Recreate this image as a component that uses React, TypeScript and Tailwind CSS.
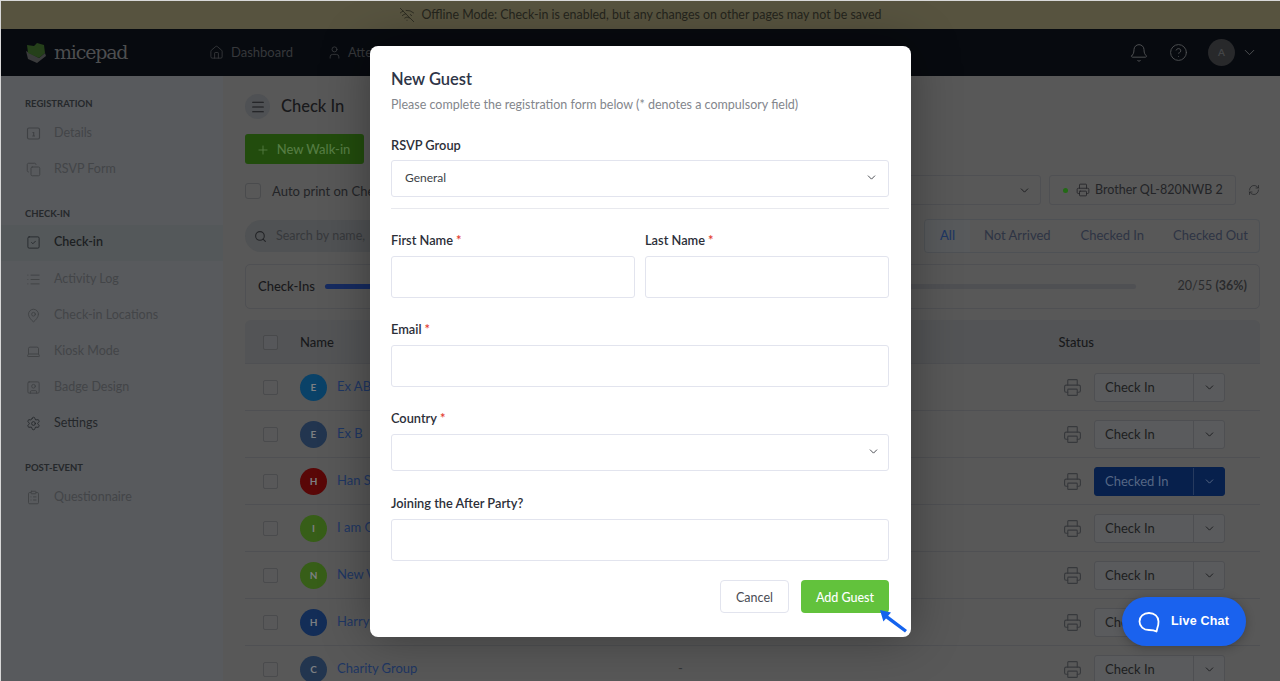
import { Bell, ChevronDown, CircleHelp, ClipboardList, Copy, Home, Laptop, List, MapPin, Menu, Plus, Printer, RefreshCw, Search, Settings, SquareCheck, SquareUser, User, WifiOff } from "lucide-react";

const DetailsIcon = ({ size, className }: { size?: number; strokeWidth?: number; className?: string }) => (
    <svg width={size} height={size} viewBox="0 0 15 15" fill="none" stroke="currentColor" strokeWidth="1.1" className={className}>
        <rect x="1.5" y="2" width="12" height="11" rx="1.5" />
        <path d="M6.5 6.5 H7.7 V10 M6.3 10 H9" />
    </svg>
);

const sidebarTop = [
    { label: "Details", icon: DetailsIcon },
    { label: "RSVP Form", icon: Copy },
];

const sidebarCheckin = [
    { label: "Check-in", icon: SquareCheck, active: true },
    { label: "Activity Log", icon: List },
    { label: "Check-in Locations", icon: MapPin },
    { label: "Kiosk Mode", icon: Laptop },
    { label: "Badge Design", icon: SquareUser },
    { label: "Settings", icon: Settings, dark: true },
];

const guests = [
    { initial: "E", name: "Ex AB", color: "bg-[#0a4268]" },
    { initial: "E", name: "Ex B", color: "bg-[#22354f]" },
    { initial: "H", name: "Han S", color: "bg-[#590707]", checked: true },
    { initial: "I", name: "I am G", color: "bg-[#375e18]" },
    { initial: "N", name: "New V", color: "bg-[#375e18]" },
    { initial: "H", name: "Harry", color: "bg-[#132d57]" },
    { initial: "C", name: "Charity Group", color: "bg-[#22354f]" },
];

const SidebarItem = ({ label, icon: Icon, active, dark }: { label: string; icon: React.ElementType; active?: boolean; dark?: boolean }) => (
    <div className={`flex items-center h-9 pl-[25px] text-[12.5px] ${active ? "bg-[#54585a] pb-[2px] font-semibold text-[#1c1f22]" : dark ? "text-[#24272a]" : "text-[#434548]"}`}>
        <Icon size={15} strokeWidth={1.4} className={active || dark ? "text-[#24272a]" : "text-[#3f4144]"} />
        <span className="ml-[13px]">{label}</span>
    </div>
);

const Sidebar = () => (
    <div className="w-[222px] shrink-0 bg-[#585a5d] pt-[22px]">
        <p className="pl-[24px] text-[9.5px] leading-3 font-bold text-[#25282b]">REGISTRATION</p>
        <div className="mt-[5px]">
            {sidebarTop.map((item) => <SidebarItem key={item.label} {...item} />)}
        </div>
        <p className="mt-[21px] pl-[24px] text-[9.5px] leading-3 font-bold text-[#25282b]">CHECK-IN</p>
        <div className="mt-[5px]">
            {sidebarCheckin.map((item) => <SidebarItem key={item.label} {...item} />)}
        </div>
        <p className="mt-[21px] pl-[24px] text-[9.5px] leading-3 font-bold text-[#25282b]">POST-EVENT</p>
        <div className="mt-[5px]">
            <SidebarItem label="Questionnaire" icon={ClipboardList} />
        </div>
    </div>
);

const TopBar = () => (
    <div className="flex items-center h-[47px] bg-[#070a0f] shrink-0">
        <div className="flex items-center w-[208px] pl-[24px]">
            <svg width="22" height="20" viewBox="0 0 22 20">
                <path d="M1 8 L14 15 L20 10 L21 13 L12 20 L3 16 Z" fill="#3a3b3c" />
                <path d="M2 2 L9 3 L12 0 L19 2 L20 10 L14 15 L3 10 Z" fill="#25401a" />
            </svg>
            <span className="ml-[7px] text-[19px] leading-none text-[#4d4e50] font-['DejaVu_Serif',serif] tracking-[-1.2px]">micepad</span>
        </div>
        <Home size={15} strokeWidth={1.3} className="text-[#3b3d40]" />
        <span className="ml-[7px] text-[13px] text-[#36383b]">Dashboard</span>
        <User size={15} strokeWidth={1.3} className="ml-[34px] text-[#3b3d40]" />
        <span className="ml-[6px] text-[13px] text-[#36383b]">Attendees</span>
        <div className="ml-auto flex items-center pr-[22px]">
            <Bell size={20} strokeWidth={1.2} className="text-[#4d4f51]" />
            <CircleHelp size={19} strokeWidth={1.2} className="ml-[20px] text-[#4d4f51]" />
            <div className="ml-[20px] flex items-center justify-center w-[27px] h-[27px] rounded-full bg-[#28292b] text-[10px] font-bold text-[#434547]">A</div>
            <ChevronDown size={17} strokeWidth={1.4} className="ml-[6px] text-[#4d4f51]" />
        </div>
    </div>
);

const StatusButton = ({ checked }: { checked?: boolean }) => (
    <div className={`flex w-[131px] h-[29px] rounded-[3px] border text-[13px] ${checked ? "bg-[#07204c] border-[#07204c] text-[#566784]" : "bg-[#5a5b5d] border-[#4e4f52] text-[#1d1e20]"}`}>
        <span className={`flex-1 pl-[10px] leading-[27px] border-r ${checked ? "border-[#263a5e]" : "border-[#4e4f52]"}`}>{checked ? "Checked In" : "Check In"}</span>
        <span className="flex items-center justify-center w-[30px]"><ChevronDown size={13} strokeWidth={1.8} className={checked ? "text-[#566784]" : "text-[#1d1e20]"} /></span>
    </div>
);

const GuestRow = ({ initial, name, color, checked }: { initial: string; name: string; color: string; checked?: boolean }) => (
    <div className="flex items-center h-[47px] border-t border-[#4f5053]">
        <div className="ml-[18px] w-[15px] h-[15px] rounded-[2px] border border-[#4a4b4d] bg-[#585859]" />
        <div className={`ml-[22px] flex items-center justify-center w-[27px] h-[27px] rounded-full text-[10px] font-bold text-[#7c7f82] ${color}`}>{initial}</div>
        <span className="ml-[10px] w-[341px] text-[13px] text-[#1e3663] whitespace-nowrap">{name}</span>
        <span className="text-[13px] text-[#333537]">-</span>
        <div className="ml-auto flex items-center pr-[35px]">
            <Printer size={19} strokeWidth={1.4} className="text-[#37393c]" />
            <div className="ml-[12px]"><StatusButton checked={checked} /></div>
        </div>
    </div>
);

const Main = () => (
    <div className="flex-1 bg-[#585858] pl-[22px] pr-[20px] pt-[18px] min-w-0">
        <div className="flex items-center h-[25px]">
            <div className="flex items-center justify-center w-[25px] h-[25px] rounded-full bg-[#4f5154]">
                <Menu size={16} strokeWidth={1.6} className="text-[#18191b]" />
            </div>
            <h1 className="ml-[11px] text-[16.5px] font-medium text-[#18191b]">Check In</h1>
        </div>
        <div className="mt-[15px] flex items-center justify-center pt-[1px] pr-[3px] w-[119px] h-[30px] rounded-[3px] bg-[#224c0d] text-[13px] font-medium text-[#557c43]">
            <Plus size={14} strokeWidth={1.5} className="mr-[7px]" />New Walk-in
        </div>
        <div className="mt-[11px] flex items-center h-[30px]">
            <div className="w-[16px] h-[16px] rounded-[3px] border border-[#4a4b4d] mt-[2px]" />
            <span className="ml-[11px] mt-[3px] text-[13px] text-[#232427] whitespace-nowrap">Auto print on Check-in</span>
            <div className="ml-auto mr-[8px] flex items-center justify-end w-[300px] h-[30px] rounded-[3px] border border-[#4f5053] pr-[9px]">
                <ChevronDown size={13} strokeWidth={1.8} className="text-[#1d1e20]" />
            </div>
            <div className="flex items-center w-[187px] h-[30px] rounded-[3px] border border-[#4f5053] pl-[13px] text-[12.5px] text-[#232427]">
                <span className="w-[5px] h-[5px] rounded-full bg-[#236a16]" />
                <Printer size={14} strokeWidth={1.4} className="ml-[8px] mr-[5px]" />Brother QL-820NWB 2
            </div>
            <div className="flex justify-end w-[24px]"><RefreshCw size={12} strokeWidth={1.4} className="text-[#232427]" /></div>
        </div>
        <div className="mt-[14px] flex items-center h-[34px]">
            <div className="flex items-center w-[300px] h-[32px] rounded-full bg-[#505254] pl-[9px]">
                <Search size={13} strokeWidth={2} className="text-[#232427]" />
                <span className="ml-[9px] text-[12.5px] text-[#37393c]">Search by name,</span>
            </div>
            <div className="ml-auto flex items-center w-[336px] h-[34px] rounded-[4px] border border-[#4e5155] text-[13px] text-[#2e3444] overflow-hidden">
                <span className="flex items-center justify-center w-[45px] h-full bg-[#585a5c] text-[#1e3663] font-medium">All</span>
                <span className="ml-[14px]">Not Arrived</span>
                <span className="ml-[30px]">Checked In</span>
                <span className="ml-[29px]">Checked Out</span>
            </div>
        </div>
        <div className="mt-[11px] flex items-center h-[45px] rounded-[5px] border border-[#4f5053] pl-[12px]">
            <span className="w-[67px] text-[13px] font-medium text-[#18191b]">Check-Ins</span>
            <div className="w-[811px] h-[5px] rounded-full bg-[#4f5053]">
                <div className="h-full w-[36%] rounded-full bg-[#162b60]" />
            </div>
            <span className="ml-auto pr-[12px] text-[12.5px] text-[#2a2b2d]">20/55 <b>(36%)</b></span>
        </div>
        <div className="mt-[11px] rounded-t-[6px] overflow-hidden">
            <div className="flex items-center h-[43px] pt-[2px] bg-[#535456] text-[13px] font-medium text-[#18191b]">
                <div className="ml-[18px] w-[15px] h-[15px] rounded-[2px] border border-[#48494b] bg-[#56575a]" />
                <span className="ml-[22px]">Name</span>
                <span className="ml-auto mr-[166px]">Status</span>
            </div>
            {guests.map((guest, i) => <GuestRow key={i} {...guest} />)}
        </div>
    </div>
);

const Field = ({ label, children, required, tight }: { label: string; children: React.ReactNode; required?: boolean; tight?: boolean }) => (
    <div className="flex-1">
        <p className="text-[12.8px] leading-4 font-semibold text-[#2b2e38]">
            {label}{required && <span className="ml-[3px] text-[#e23a2e]">*</span>}
        </p>
        <div className={tight ? "mt-[7px]" : "mt-[8px]"}>{children}</div>
    </div>
);

const TextBox = () => <div className="h-[42px] rounded-[3px] border border-[#e2e4ee] bg-white" />;

const SelectBox = ({ value, height, chevron }: { value?: string; height: string; chevron: string }) => (
    <div className={`flex items-center justify-between rounded-[3px] border border-[#e2e4ee] bg-white pl-[13px] pb-[2px] text-[12px] text-[#3c3f46] ${height} ${chevron}`}>
        <span>{value}</span>
        <ChevronDown size={13} strokeWidth={1.6} className="text-[#33363c]" />
    </div>
);

const NewGuestModal = () => (
    <div className="absolute left-[369px] top-[45px] w-[541px] h-[591px] rounded-[8px] bg-white pl-[21px] pr-[22px] pt-[22px] shadow-[0_0_48px_rgba(0,0,0,0.35)]">
        <h2 className="text-[16.5px] leading-[22px] font-semibold text-[#2e3547]">New Guest</h2>
        <p className="mt-[7px] text-[12.5px] leading-4 text-[#83868c]">Please complete the registration form below (* denotes a compulsory field)</p>
        <div className="mt-[24px]">
            <Field label="RSVP Group" tight><SelectBox value="General" height="h-[37px]" chevron="pr-[10px]" /></Field>
        </div>
        <div className="mt-[11px] h-px bg-[#e8e9ee]" />
        <div className="mt-[23px] flex gap-[10px]">
            <Field label="First Name" required><TextBox /></Field>
            <Field label="Last Name" required><TextBox /></Field>
        </div>
        <div className="mt-[23px]">
            <Field label="Email" required><TextBox /></Field>
        </div>
        <div className="mt-[23px]">
            <Field label="Country" required><SelectBox height="h-[37px]" chevron="pr-[8px]" /></Field>
        </div>
        <div className="mt-[24px]">
            <Field label="Joining the After Party?"><TextBox /></Field>
        </div>
        <div className="mt-[19px] flex justify-end gap-[12px]">
            <div className="flex items-center justify-center pt-[3px] w-[69px] h-[33px] rounded-[4px] border border-[#e2e4ee] text-[12.5px] text-[#4a4d55]">Cancel</div>
            <div className="flex items-center justify-center pt-[3px] w-[88px] h-[33px] rounded-[4px] bg-[#62c23c] text-[12.5px] font-medium text-white">Add Guest</div>
        </div>
        <svg width="32" height="26" viewBox="0 0 32 26" className="absolute left-[508px] top-[563px]">
            <path d="M2 1 L13 3.5 L10.2 6.8 L29 21 L27 23.5 L8 9.5 L5.4 12.6 Z" fill="#1463ee" />
        </svg>
    </div>
);

const LiveChat = () => (
    <div className="absolute left-[1121px] top-[596px] flex items-center w-[124px] h-[49px] rounded-full bg-[#1a62ee] pl-[15px] shadow-[0_2px_10px_rgba(0,0,0,0.25)] font-['Liberation_Sans',sans-serif] text-[12.5px] font-bold text-white">
        <svg width="24" height="24" viewBox="0 0 24 24" fill="none" stroke="white" strokeWidth="1.8">
            <path d="M12 3 C6.5 3 2.5 6.6 2.5 11.5 C2.5 16.4 6.5 20 12 20 C14.5 20 17 20 19.5 21.5 L20.5 17.5 C21.2 16 21.5 13.5 21.5 11.5 C21.5 6.6 17.5 3 12 3 Z" strokeLinejoin="round" />
        </svg>
        <span className="ml-[10px] tracking-[0.2px]">Live Chat</span>
    </div>
);

export default function App() {
    return (
        <div className="relative flex flex-col h-[681px] overflow-hidden border-t border-l border-[#d8d8d8] font-['Lato',sans-serif]">
            <div className="flex items-center justify-center gap-[6px] h-[28px] shrink-0 bg-[#57533f] text-[12.4px] text-[#24241c]">
                <WifiOff size={16} strokeWidth={1.2} />
                <span>Offline Mode: Check-in is enabled, but any changes on other pages may not be saved</span>
            </div>
            <TopBar />
            <div className="flex flex-1 min-h-0">
                <Sidebar />
                <Main />
            </div>
            <NewGuestModal />
            <LiveChat />
        </div>
    );
}
